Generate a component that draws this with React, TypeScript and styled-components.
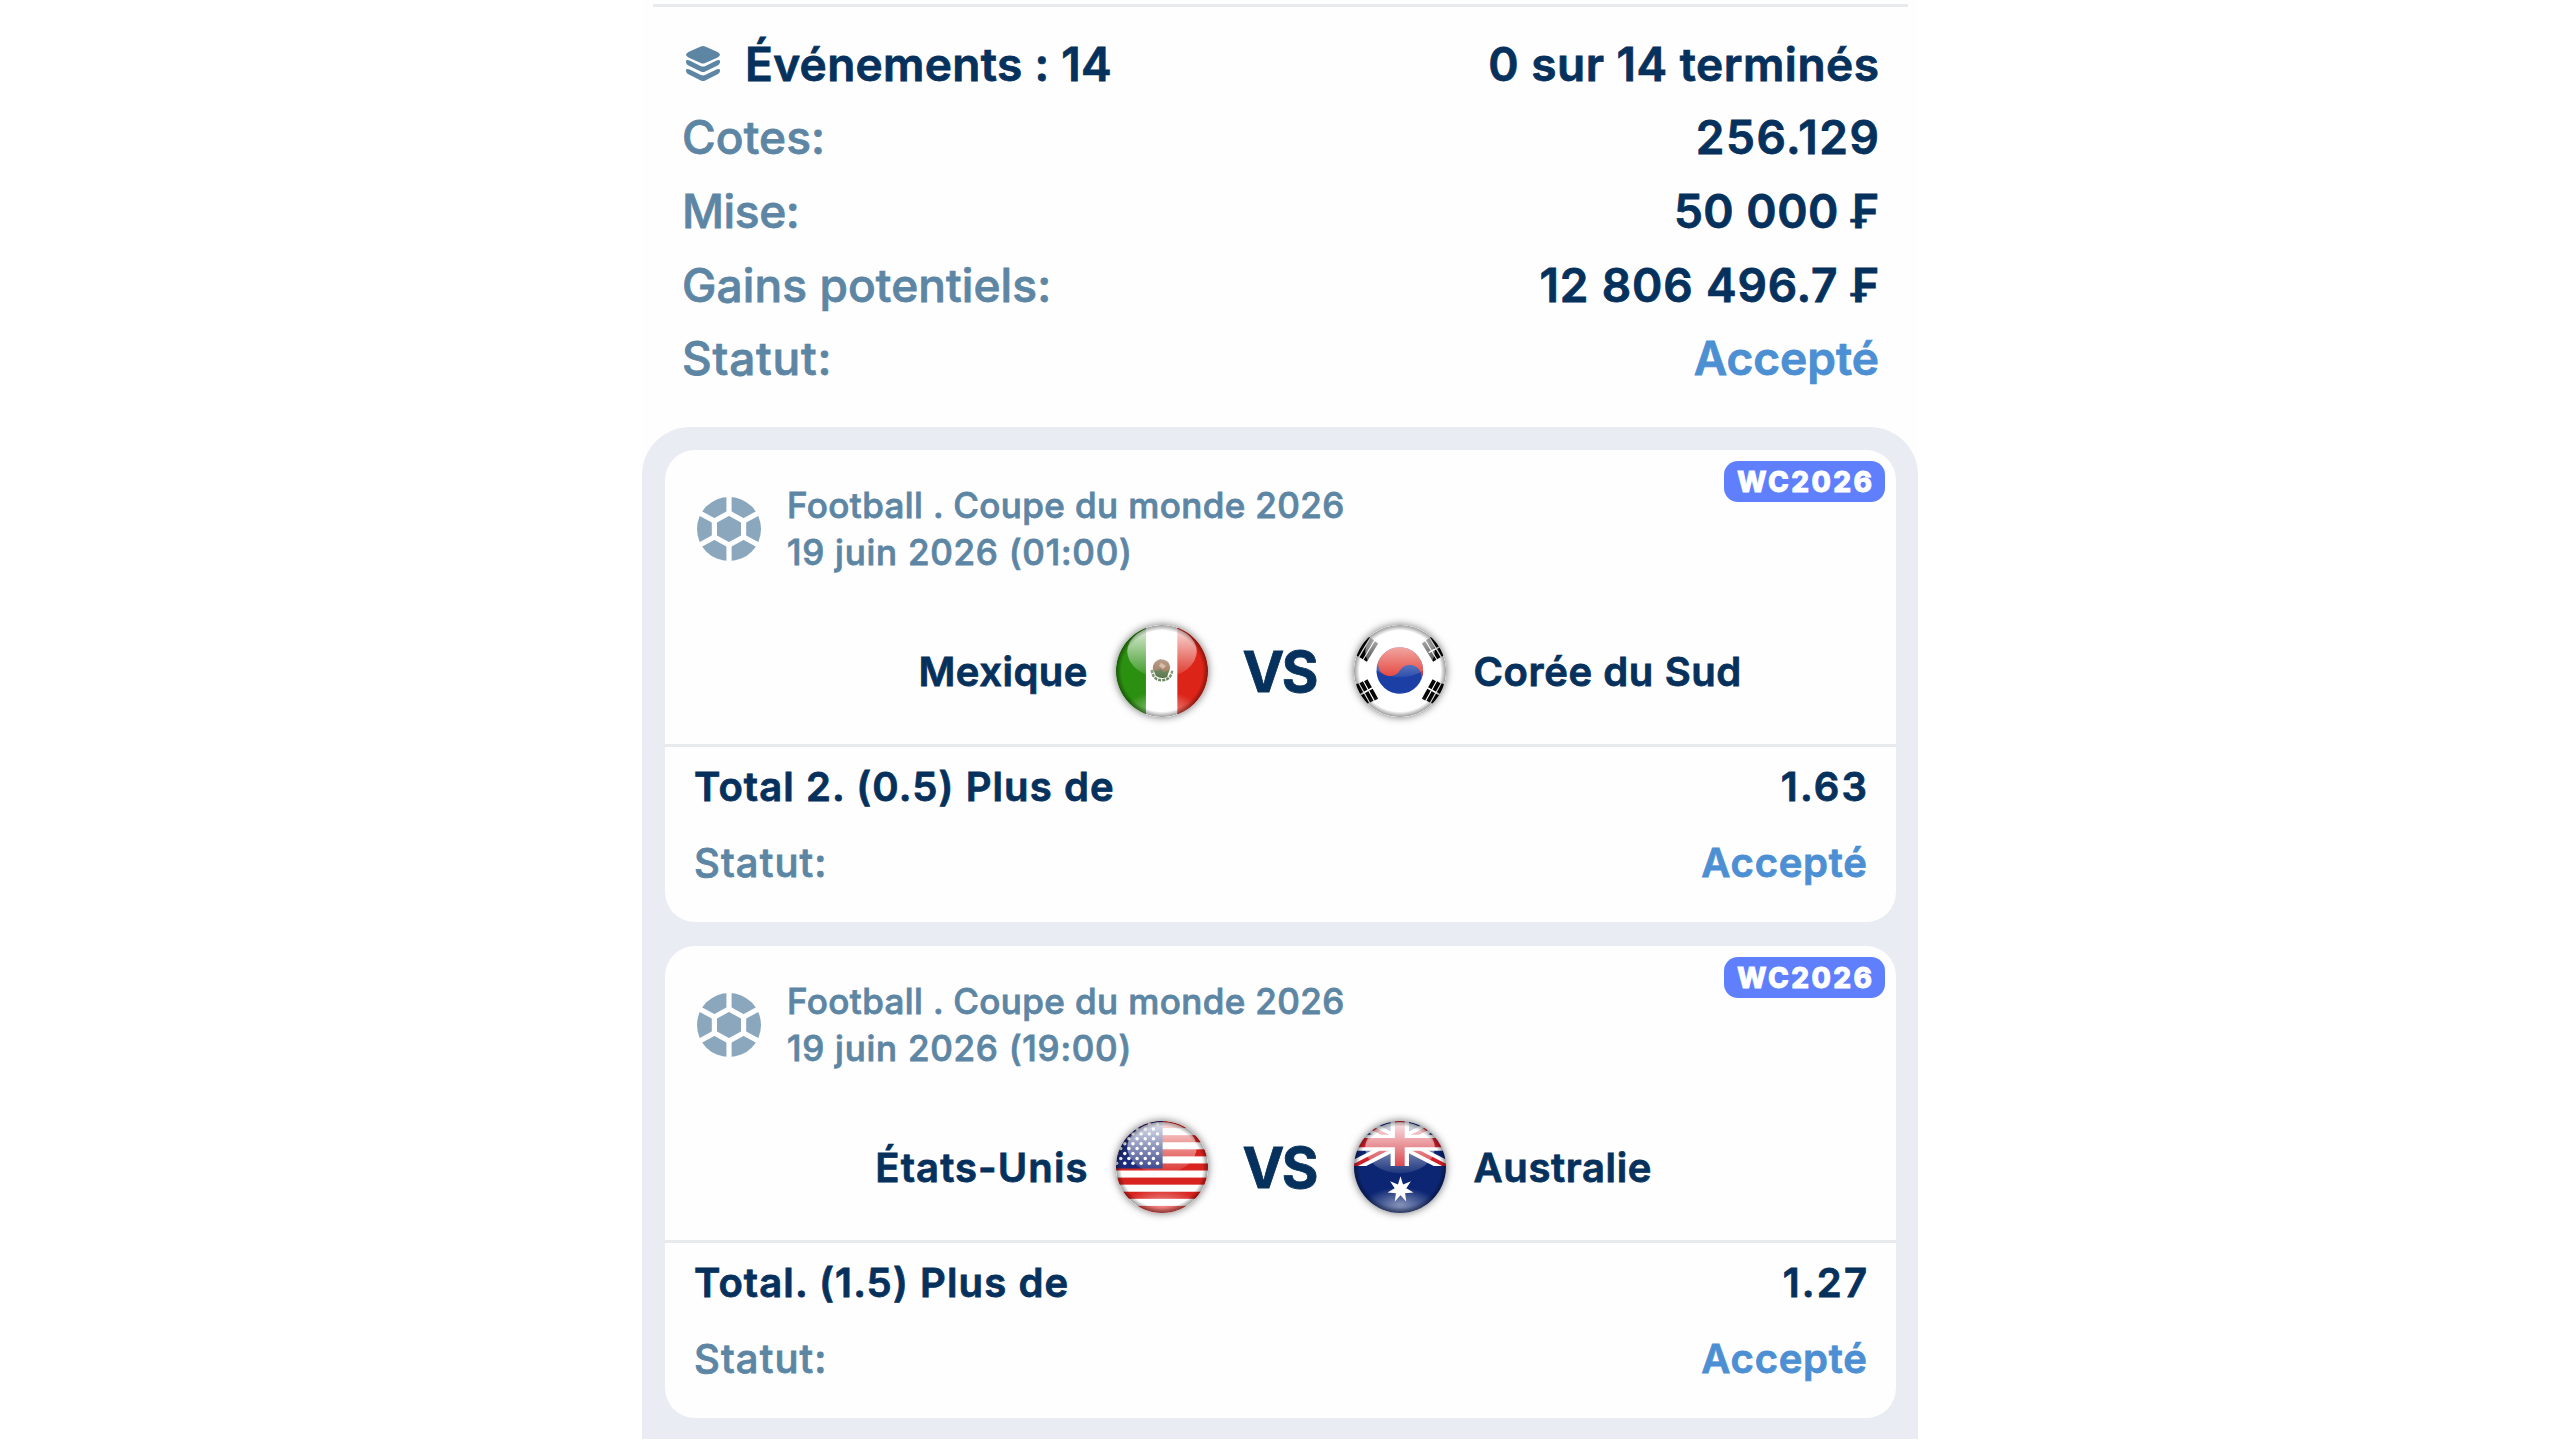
import React from "react";
import styled, { createGlobalStyle } from "styled-components";

const colors = {
  navy: "#06315d",
  slate: "#5d86a4",
  blue: "#4c8fd3",
  badge: "#607ffc",
  ball: "#8aa7be",
  panel: "#e9ecf3",
  line: "#e9eaee",
  surface: "#fefefe",
};

const GlobalStyle = createGlobalStyle`
  body {
    margin: 0;
    background: #fff;
    overflow: hidden;
    font-family: Inter, "Liberation Sans", sans-serif;
  }
`;

const Page = styled.main`
  display: flex;
  justify-content: center;
  height: 1440px;
`;

const Slip = styled.div`
  display: flex;
  flex-direction: column;
  width: 1276px;
  background: ${colors.surface};
`;

const TopLine = styled.div`
  height: 3px;
  margin: 4px 10px 0 11px;
  background: ${colors.line};
`;

const Summary = styled.section`
  display: grid;
  grid-template-rows: repeat(5, 73.6px);
  height: 400px;
  margin-top: 20px;
  padding: 0 39px 0 40px;
`;

const Row = styled.div`
  display: flex;
  align-items: center;
  justify-content: space-between;
`;

type TextProps = {
  size: number;
  weight?: number;
  color?: string;
  track?: number;
};

// the negative margin removes the tracking after the last letter
const Text = styled.span.withConfig({
  shouldForwardProp: (prop) =>
    !["size", "weight", "color", "track"].includes(prop),
})<TextProps>`
  font-size: ${({ size }) => size}px;
  font-weight: ${({ weight = 600 }) => weight};
  color: ${({ color = colors.navy }) => color};
  letter-spacing: ${({ track = 0 }) => track}px;
  margin-right: ${({ track = 0 }) => -track}px;
  white-space: nowrap;
  -webkit-text-stroke: 0.8px currentColor;
`;

const TitleGroup = styled.div`
  display: flex;
  align-items: center;
  gap: 25px;
  padding-left: 4px;
`;

const Panel = styled.section`
  display: flex;
  flex-direction: column;
  gap: 24px;
  height: 989px;
  padding: 23px 22px 0 23px;
  border-radius: 48px 48px 0 0;
  background: ${colors.panel};
`;

const Card = styled.article`
  position: relative;
  height: 472px;
  border-radius: 30px;
  background: ${colors.surface};
`;

const Badge = styled.div`
  position: absolute;
  top: 11px;
  right: 11px;
  display: flex;
  align-items: center;
  justify-content: center;
  width: 161px;
  height: 41px;
  border-radius: 14px;
  background: ${colors.badge};
`;

const CardHeader = styled.header`
  display: flex;
  align-items: center;
  gap: 26px;
  padding: 32px 0 0 32px;
`;

const HeaderLines = styled.div`
  display: flex;
  flex-direction: column;
  line-height: 47px;
`;

const Match = styled.div`
  display: grid;
  grid-template-columns: 1fr 92px 146px 92px 1fr;
  align-items: center;
  height: 92px;
  margin: 49px 0 28px;
`;

const Team = styled.div<{ $side: "home" | "away" }>`
  display: flex;
  justify-content: ${({ $side }) =>
    $side === "home" ? "flex-end" : "flex-start"};
  padding: ${({ $side }) => ($side === "home" ? "0 28px 0 0" : "0 0 0 28px")};
`;

const Versus = styled.div`
  display: flex;
  justify-content: center;
  padding-top: 2px;
`;

const FlagDisc = styled.div`
  width: 92px;
  height: 92px;
  border-radius: 50%;
  box-shadow: 0 0 7px 1px rgba(30, 30, 30, 0.5);

  svg {
    display: block;
  }
`;

const Divider = styled.div`
  height: 3px;
  margin-top: -1px;
  background: ${colors.line};
`;

const Selection = styled.div`
  display: grid;
  grid-template-rows: repeat(2, 75.6px);
  padding: 2px 29px 0 29px;
`;

function LayersIcon() {
  return (
    <svg width={34} height={35} viewBox="0 0 34 35" fill={colors.slate}>
      <path d="M14.8.6Q17-.4 19.2.6L31.6 6Q34 7.4 34 8.8Q34 10.2 31.6 11.4L19.2 17Q17 18 14.8 17L2.4 11.4Q0 10.2 0 8.8Q0 7.4 2.4 6Z" />
      <path d="M0 14.6Q1.4 13.6 3.6 14.6L15 20.2Q17 21 19 20.2L30.4 14.6Q32.6 13.6 34 14.6Q34.4 18 31.6 19.4L19.2 25.6Q17 26.6 14.8 25.6L2.4 19.4Q-.4 18 0 14.6Z" />
      <path d="M0 23.4Q1.4 22.4 3.6 23.4L15 29Q17 29.8 19 29L30.4 23.4Q32.6 22.4 34 23.4Q34.4 26.8 31.6 28.2L19.2 34.4Q17 35.4 14.8 34.4L2.4 28.2Q-.4 26.8 0 23.4Z" />
    </svg>
  );
}

function BallIcon() {
  return (
    <svg width={64} height={64} viewBox="0 0 64 64">
      <circle cx="32" cy="32" r="32" fill={colors.ball} />
      <g fill="none" stroke={colors.surface} strokeWidth="5.2">
        <path d="M32 16 46.6 24V40L32 48 17.4 40V24Z" />
        <path d="M32 16V-2M46.6 24 64 14.5M46.6 40 64 49.5M32 48V66M17.4 40 0 49.5M17.4 24 0 14.5" />
      </g>
    </svg>
  );
}

function Mexico() {
  return (
    <>
      <path fill="#fff" d="M0 0h90v90H0z" />
      <path fill="#2b8f10" d="M0 0h29.3v90H0z" />
      <path fill="#dc2418" d="M60 0h30v90H60z" />
      <path
        d="M35 44q1 10 10 10t10-10"
        fill="none"
        stroke="#6f8a63"
        strokeWidth="2.4"
        strokeDasharray="3 1"
      />
      <path
        fill="#94694b"
        d="M37 38q4-6 10-4 6 2 6 8-1 6-6 8-4 1-8-1l3-4-5 1q-2-4 0-8Z"
      />
      <path fill="#4f6e3e" d="M37 45l7-2 3 3 5-2-2 7q-6 2-11-1Z" />
      <path fill="#c9a58c" d="M44 37l5 3-3 3-4-3Z" />
    </>
  );
}

function Korea() {
  return (
    <>
      <path fill="#fff" d="M0 0h90v90H0z" />
      <g transform="translate(44.8 44.5) rotate(31)">
        <circle r="22.8" fill="#1b3fa5" />
        <path
          fill="#e2382f"
          d="M-22.8 0A22.8 22.8 0 0 1 22.8 0A11.4 11.4 0 0 0 0 0A11.4 11.4 0 0 1-22.8 0Z"
        />
      </g>
      <g stroke="#050505" strokeWidth="3.8">
        <path d="M2.5 30 14 11M7 32.5 18 14M11 35 22 17" />
        <path d="M87.5 30 76 11M83 32.5 72 14M79 35 68 17" />
        <path d="M2.5 58 13 77M7 56 17.5 75M11.5 54 22 73" />
        <path d="M87.5 58 77 77M83 56 72.5 75M78.5 54 68 73" />
      </g>
      <g stroke="#fff" strokeWidth="1.6">
        <path d="M3 70 21 60M87 70 69 60M73 27 90 18" />
      </g>
    </>
  );
}

function Usa() {
  const dots = [];
  for (let r = 0; r < 9; r++) {
    for (let c = 0; c < 6; c++) {
      const x = 0.6 + c * 8 + (r % 2 ? 4 : 0);
      if (x < 44) {
        dots.push(<circle key={`${r}-${c}`} cx={x} cy={3 + r * 4.8} r="1.7" />);
      }
    }
  }
  return (
    <>
      <path fill="#fff" d="M0 0h90v90H0z" />
      {[0, 2, 4, 6, 8, 10, 12].map((i) => (
        <rect key={i} y={i * 6.92} width="90" height="6.92" fill="#d8231f" />
      ))}
      <path fill="#1d2c7a" d="M0 0h45.6v46.5H0z" />
      <g fill="#fff">{dots}</g>
    </>
  );
}

function Australia() {
  return (
    <>
      <path fill="#0c2673" d="M0 0h90v90H0z" />
      <svg width="90" height="44" viewBox="0 0 90 44">
        <path
          d="M-4 46 94-4M-4-4 94 46"
          stroke="#fff"
          strokeWidth="11"
          fill="none"
        />
        <path
          d="M-4 46 45 21M45 21 94 46M-4-4 45 21M45 21 94-4"
          stroke="#d0202b"
          strokeWidth="3.6"
          fill="none"
        />
        <path fill="#fff" d="M35.8 0h18v44h-18zM0 13.5h90v15.5H0z" />
        <path fill="#d0202b" d="M40 0h9.6v44H40zM0 16.6h90v9H0z" />
      </svg>
      <polygon
        fill="#fff"
        points="45.5,54 48,62 55.7,58.9 51.2,65.8 58.2,69.9 50,70.7 51.1,78.7 45.5,72.6 39.9,78.7 41,70.7 32.8,69.9 39.8,65.8 35.3,58.9 43,62"
      />
    </>
  );
}

const flags = {
  mx: Mexico,
  kr: Korea,
  us: Usa,
  au: Australia,
};

type FlagCode = keyof typeof flags;

function Flag({ code }: { code: FlagCode }) {
  const Art = flags[code];
  return (
    <FlagDisc>
      <svg width={92} height={92} viewBox="0 0 90 90">
        <defs>
          <clipPath id={`clip-${code}`}>
            <circle cx="45" cy="45" r="45" />
          </clipPath>
          <linearGradient id={`gloss-${code}`} x1="0" y1="0" x2="0" y2="1">
            <stop offset="0" stopColor="#fff" stopOpacity="0.88" />
            <stop offset="1" stopColor="#fff" stopOpacity="0.08" />
          </linearGradient>
          <radialGradient id={`glow-${code}`}>
            <stop offset="0" stopColor="#fff" stopOpacity="0.5" />
            <stop offset="1" stopColor="#fff" stopOpacity="0" />
          </radialGradient>
          <radialGradient id={`edge-${code}`}>
            <stop offset="0.88" stopColor="#000" stopOpacity="0" />
            <stop offset="1" stopColor="#000" stopOpacity="0.4" />
          </radialGradient>
        </defs>
        <g clipPath={`url(#clip-${code})`}>
          <Art />
          <ellipse cx="45" cy="82" rx="36" ry="17" fill={`url(#glow-${code})`} />
          <ellipse cx="45" cy="26" rx="34" ry="25" fill={`url(#gloss-${code})`} />
          <circle cx="45" cy="45" r="45" fill={`url(#edge-${code})`} />
        </g>
      </svg>
    </FlagDisc>
  );
}

type TeamInfo = { name: string; flag: FlagCode; track: number };

type Bet = {
  date: string;
  home: TeamInfo;
  away: TeamInfo;
  pick: string;
  odds: string;
};

const bets: Bet[] = [
  {
    date: "19 juin 2026 (01:00)",
    home: { name: "Mexique", flag: "mx", track: 0.5 },
    away: { name: "Corée du Sud", flag: "kr", track: 0.6 },
    pick: "Total 2. (0.5) Plus de",
    odds: "1.63",
  },
  {
    date: "19 juin 2026 (19:00)",
    home: { name: "États-Unis", flag: "us", track: 1.1 },
    away: { name: "Australie", flag: "au", track: 0.65 },
    pick: "Total. (1.5) Plus de",
    odds: "1.27",
  },
];

const summary = [
  { label: "Cotes:", track: 0.1, value: "256.129", valueTrack: 1.6 },
  { label: "Mise:", track: -0.4, value: "50 000 ₣", valueTrack: 0.5 },
  {
    label: "Gains potentiels:",
    track: 0.1,
    value: "12 806 496.7 ₣",
    valueTrack: 0.85,
  },
];

function BetCard({ bet }: { bet: Bet }) {
  return (
    <Card>
      <Badge>
        <Text size={28} weight={800} color="#fff" track={2.4}>
          WC2026
        </Text>
      </Badge>
      <CardHeader>
        <BallIcon />
        <HeaderLines>
          <Text size={35} weight={500} color={colors.slate} track={0.39}>
            Football . Coupe du monde 2026
          </Text>
          <Text size={35} weight={500} color={colors.slate} track={0.74}>
            {bet.date}
          </Text>
        </HeaderLines>
      </CardHeader>
      <Match>
        <Team $side="home">
          <Text size={40} track={bet.home.track}>
            {bet.home.name}
          </Text>
        </Team>
        <Flag code={bet.home.flag} />
        <Versus>
          <Text size={56} weight={700} track={-2.5}>
            VS
          </Text>
        </Versus>
        <Flag code={bet.away.flag} />
        <Team $side="away">
          <Text size={40} track={bet.away.track}>
            {bet.away.name}
          </Text>
        </Team>
      </Match>
      <Divider />
      <Selection>
        <Row>
          <Text size={40} track={1.1}>
            {bet.pick}
          </Text>
          <Text size={40} track={2.2}>
            {bet.odds}
          </Text>
        </Row>
        <Row>
          <Text size={40} weight={500} color={colors.slate} track={1.1}>
            Statut:
          </Text>
          <Text size={40} color={colors.blue} track={0.76}>
            Accepté
          </Text>
        </Row>
      </Selection>
    </Card>
  );
}

export default function App() {
  return (
    <Page>
      <GlobalStyle />
      <Slip>
        <TopLine />
        <Summary>
          <Row>
            <TitleGroup>
              <LayersIcon />
              <Text size={46} track={0.31}>
                Événements : 14
              </Text>
            </TitleGroup>
            <Text size={46} track={0.5}>
              0 sur 14 terminés
            </Text>
          </Row>
          {summary.map((item) => (
            <Row key={item.label}>
              <Text
                size={46}
                weight={500}
                color={colors.slate}
                track={item.track}
              >
                {item.label}
              </Text>
              <Text size={46} track={item.valueTrack}>
                {item.value}
              </Text>
            </Row>
          ))}
          <Row>
            <Text size={46} weight={500} color={colors.slate} track={0.8}>
              Statut:
            </Text>
            <Text size={46} color={colors.blue}>
              Accepté
            </Text>
          </Row>
        </Summary>
        <Panel>
          {bets.map((bet) => (
            <BetCard key={bet.date} bet={bet} />
          ))}
        </Panel>
      </Slip>
    </Page>
  );
}
